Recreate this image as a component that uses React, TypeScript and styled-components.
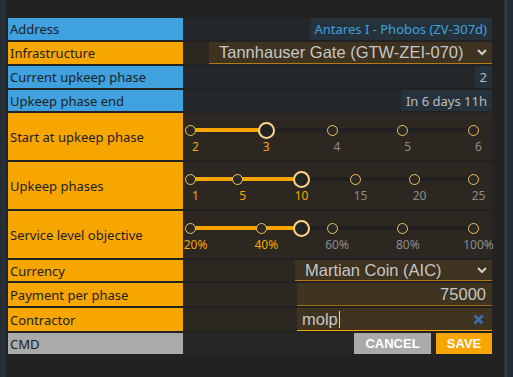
import React from "react";
import styled, { createGlobalStyle } from "styled-components";

const Global = createGlobalStyle`
  html, body { margin: 0; padding: 0; background: #222222; }
  body { font-family: "Noto Sans", "DejaVu Sans", sans-serif; width: 513px; height: 377px; overflow: hidden; }
  * { box-sizing: border-box; }
`;

const BLUE = "#3fa2de";
const ORANGE = "#f7a600";
const GRAY = "#aaaaaa";

const Frame = styled.div`
  display: flex;
  width: 513px;
  height: 377px;
  background: #222222;
`;

const LeftEdge = styled.div`
  width: 8px;
  flex: none;
  background: linear-gradient(to right, #242b31 0%, #2a333a 55%, #1c2024 100%);
`;

const RightEdge = styled.div`
  width: 9px;
  flex: none;
  background: linear-gradient(to right, #1c2328 0px, #2e3e4a 1px, #2e3e4a 2px, #22303a 3px, #1f2a33 100%);
`;

const Main = styled.div`
  width: 484px;
  flex: none;
  padding-top: 18px;
`;

const Spacer = styled.div`
  flex: 1;
`;

const Form = styled.div`
  display: flex;
  flex-direction: column;
  gap: 2px;
`;

const Row = styled.div<{ $h: number }>`
  display: grid;
  grid-template-columns: 175px 1fr;
  height: ${(p) => p.$h}px;
`;

const Label = styled.div<{ $c: string }>`
  background: ${(p) => p.$c};
  color: #1d2126;
  font-size: 13px;
  padding-left: 2px;
  display: flex;
  align-items: center;
  white-space: nowrap;
`;

const Value = styled.div<{ $bg: string }>`
  background: ${(p) => p.$bg};
  display: flex;
  justify-content: flex-end;
  align-items: stretch;
  position: relative;
`;

const InfoBox = styled.div<{ $blue?: boolean }>`
  background: #26323b;
  color: ${(p) => (p.$blue ? BLUE : "#bcbcbc")};
  font-size: 13px;
  padding: 0 5px;
  display: flex;
  align-items: center;
  white-space: nowrap;
`;

const SelectBox = styled.div<{ $w: number }>`
  width: ${(p) => p.$w}px;
  background: #3e3220;
  border-bottom: 1px solid #b57a10;
  color: #c6c6c6;
  font-family: "Liberation Sans", Arial, sans-serif;
  font-size: 16.5px;
  display: flex;
  align-items: center;
  justify-content: space-between;
  padding: 0 5px 0 10px;
  white-space: nowrap;
`;

const InputBox = styled.div<{ $focus?: boolean; $right?: boolean }>`
  width: 195px;
  background: #3e3420;
  border-bottom: 1px solid ${(p) => (p.$focus ? ORANGE : "#9d6c12")};
  color: #c6c6c6;
  font-family: "Liberation Sans", Arial, sans-serif;
  font-size: 16.5px;
  display: flex;
  align-items: center;
  justify-content: ${(p) => (p.$right ? "flex-end" : "space-between")};
  padding: 0 ${(p) => (p.$right ? 6 : 8)}px 0 5px;
  white-space: nowrap;
`;

const Caret = styled.span`
  display: inline-block;
  width: 1px;
  height: 17px;
  background: #d0d0d0;
  vertical-align: middle;
  margin-left: 1px;
`;

const TextWithCaret = styled.span`
  display: flex;
  align-items: center;
`;

const Buttons = styled.div`
  display: flex;
  gap: 5px;
`;

const Button = styled.button<{ $bg: string; $w: number }>`
  width: ${(p) => p.$w}px;
  border: none;
  background: ${(p) => p.$bg};
  color: #ffffff;
  font-family: "Liberation Sans", Arial, sans-serif;
  font-weight: bold;
  font-size: 13px;
  padding: 0;
  margin: 0;
  cursor: pointer;
`;

const SliderBox = styled.div`
  position: relative;
  width: 100%;
  height: 100%;
`;

const Rail = styled.div`
  position: absolute;
  left: 7px;
  width: 286px;
  top: 15px;
  height: 4px;
  background: #212121;
`;

const Fill = styled.div`
  position: absolute;
  left: 7px;
  top: 15px;
  height: 4px;
  background: ${ORANGE};
`;

const Dot = styled.div`
  position: absolute;
  top: 12px;
  width: 11px;
  height: 11px;
  margin-left: -5.5px;
  border-radius: 50%;
  border: 1.5px solid #f3c266;
  background: #2b2721;
`;

const Handle = styled.div`
  position: absolute;
  top: 8.5px;
  width: 17px;
  height: 17px;
  margin-left: -8.5px;
  border-radius: 50%;
  border: 2px solid #fcd589;
  background: #232323;
`;

const MarkLabel = styled.div<{ $active: boolean }>`
  position: absolute;
  top: 26px;
  font-size: 12px;
  line-height: 15px;
  transform: translateX(-50%);
  color: ${(p) => (p.$active ? ORANGE : "#8c8c8c")};
  white-space: nowrap;
`;

type SliderProps = { min: number; max: number; value: number; marks: number[]; suffix?: string };

const Slider: React.FC<SliderProps> = ({ min, max, value, marks, suffix = "" }) => {
  const pos = (v: number) => 7.5 + ((v - min) / (max - min)) * 283;
  const hx = pos(value) + 5;
  return (
    <SliderBox>
      <Rail />
      <Fill style={{ width: hx - 7 }} />
      {marks.filter((m) => m !== value).map((m) => (
        <Dot key={"d" + m} style={{ left: pos(m) }} />
      ))}
      <Handle style={{ left: hx }} />
      {marks.map((m) => (
        <MarkLabel key={"l" + m} $active={m <= value} style={{ left: pos(m) + 5 }}>
          {m}
          {suffix}
        </MarkLabel>
      ))}
    </SliderBox>
  );
};

const Chevron = () => (
  <svg width="10" height="7" viewBox="0 0 10 7">
    <path d="M1 1 L5 5 L9 1" fill="none" stroke="#cfcfcf" strokeWidth="2" />
  </svg>
);

const ClearIcon = () => (
  <svg width="11" height="11" viewBox="0 0 11 11">
    <path d="M1.5 1.5 L9.5 9.5 M9.5 1.5 L1.5 9.5" fill="none" stroke="#3a6db3" strokeWidth="2.6" />
  </svg>
);

const BLUE_BG = "#242729";
const ORANGE_BG = "#2c2821";
const GRAY_BG = "#262626";

export default function App() {
  return (
    <>
      <Global />
      <Frame>
        <LeftEdge />
        <Main>
          <Form>
            <Row $h={22}>
              <Label $c={BLUE}>Address</Label>
              <Value $bg={BLUE_BG}>
                <InfoBox $blue>Antares I - Phobos (ZV-307d)</InfoBox>
              </Value>
            </Row>
            <Row $h={22}>
              <Label $c={ORANGE}>Infrastructure</Label>
              <Value $bg={ORANGE_BG}>
                <SelectBox $w={283}>
                  <span>Tannhauser Gate (GTW-ZEI-070)</span>
                  <Chevron />
                </SelectBox>
              </Value>
            </Row>
            <Row $h={22}>
              <Label $c={BLUE}>Current upkeep phase</Label>
              <Value $bg={BLUE_BG}>
                <InfoBox>2</InfoBox>
              </Value>
            </Row>
            <Row $h={21}>
              <Label $c={BLUE}>Upkeep phase end</Label>
              <Value $bg={BLUE_BG}>
                <InfoBox>In 6 days 11h</InfoBox>
              </Value>
            </Row>
            <Row $h={47}>
              <Label $c={ORANGE}>Start at upkeep phase</Label>
              <Value $bg={ORANGE_BG}>
                <Slider min={2} max={6} value={3} marks={[2, 3, 4, 5, 6]} />
              </Value>
            </Row>
            <Row $h={47}>
              <Label $c={ORANGE}>Upkeep phases</Label>
              <Value $bg={ORANGE_BG}>
                <Slider min={1} max={25} value={10} marks={[1, 5, 10, 15, 20, 25]} />
              </Value>
            </Row>
            <Row $h={47}>
              <Label $c={ORANGE}>Service level objective</Label>
              <Value $bg={ORANGE_BG}>
                <Slider min={20} max={100} value={50} marks={[20, 40, 60, 80, 100]} suffix="%" />
              </Value>
            </Row>
            <Row $h={21}>
              <Label $c={ORANGE}>Currency</Label>
              <Value $bg={ORANGE_BG}>
                <SelectBox $w={197}>
                  <span>Martian Coin (AIC)</span>
                  <Chevron />
                </SelectBox>
              </Value>
            </Row>
            <Row $h={23}>
              <Label $c={ORANGE}>Payment per phase</Label>
              <Value $bg={ORANGE_BG}>
                <InputBox $right>75000</InputBox>
              </Value>
            </Row>
            <Row $h={23}>
              <Label $c={ORANGE}>Contractor</Label>
              <Value $bg={ORANGE_BG}>
                <InputBox $focus>
                  <TextWithCaret>
                    molp
                    <Caret />
                  </TextWithCaret>
                  <ClearIcon />
                </InputBox>
              </Value>
            </Row>
            <Row $h={21}>
              <Label $c={GRAY}>CMD</Label>
              <Value $bg={GRAY_BG}>
                <Buttons>
                  <Button $bg={GRAY} $w={77}>CANCEL</Button>
                  <Button $bg={ORANGE} $w={56}>SAVE</Button>
                </Buttons>
              </Value>
            </Row>
          </Form>
        </Main>
        <Spacer />
        <RightEdge />
      </Frame>
    </>
  );
}
